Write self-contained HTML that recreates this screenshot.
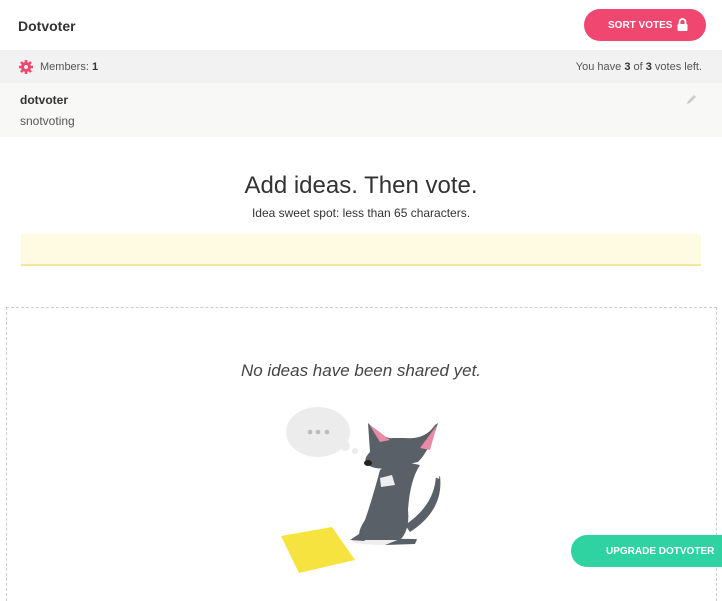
<!DOCTYPE html>
<html style="height:601px;overflow:hidden"><head><meta charset="utf-8"><style>
*{margin:0;padding:0;box-sizing:border-box}
body{width:722px;height:601px;overflow:hidden;background:#fff;font-family:"Liberation Sans",sans-serif;color:#333;position:relative}
.abs{position:absolute}
</style></head><body>
<div class="abs" style="left:18px;top:18px;font-size:14px;font-weight:bold;color:#333">Dotvoter</div>
<div class="abs" style="left:584px;top:9px;width:122px;height:32px;border-radius:16px;background:#ef476f;color:#fff;font-size:10px;font-weight:bold;padding-left:24px;padding-top:11px">SORT VOTES
<svg class="abs" style="left:93px;top:9px" width="11" height="13" viewBox="0 0 11 13"><path d="M2.5 6V4a3 3 0 0 1 6 0v2" stroke="#fff" stroke-width="1.8" fill="none"/><rect x="0.5" y="6" width="10" height="7" rx="1" fill="#fff"/></svg></div>
<div class="abs" style="left:0;top:50px;width:722px;height:33px;background:#f2f2f2"></div>
<svg class="abs" style="left:19px;top:60px" width="14" height="14" viewBox="0 0 14 14"><circle cx="7" cy="7" r="5" fill="#ef476f"/><g stroke="#ef476f" stroke-width="2.6"><line x1="7" y1="0" x2="7" y2="14"/><line x1="0" y1="7" x2="14" y2="7"/><line x1="2" y1="2" x2="12" y2="12"/><line x1="12" y1="2" x2="2" y2="12"/></g><circle cx="7" cy="7" r="2" fill="#f2f2f2"/></svg>
<div class="abs" style="left:40px;top:61px;font-size:11px;color:#555">Members: <b style="color:#333">1</b></div>
<div class="abs" style="right:20px;top:61px;font-size:11px;color:#555">You have <b style="color:#333">3</b> of <b style="color:#333">3</b> votes left.</div>
<div class="abs" style="left:0;top:83px;width:722px;height:54px;background:#f8f8f7"></div>
<div class="abs" style="left:20px;top:93px;font-size:12px;font-weight:bold;color:#333">dotvoter</div>
<div class="abs" style="left:20px;top:114px;font-size:12px;color:#555">snotvoting</div>
<svg class="abs" style="left:685px;top:94px" width="12" height="12" viewBox="0 0 12 12"><path d="M2 10l1-3 6-6 2 2-6 6z" fill="#ccc"/></svg>
<div class="abs" style="left:0;top:172px;width:722px;text-align:center;font-size:24px;color:#333">Add ideas. Then vote.</div>
<div class="abs" style="left:0;top:206px;width:722px;text-align:center;font-size:12px;color:#333">Idea sweet spot: less than 65 characters.</div>
<div class="abs" style="left:21px;top:234px;width:680px;height:32px;background:#fffbe3;border-bottom:2px solid #f1e7a0"></div>
<div class="abs" style="left:6px;top:307px;width:711px;height:294px;border:1px dashed #ccc;border-bottom:none"></div>
<div class="abs" style="left:0;top:361px;width:722px;text-align:center;font-size:17px;font-style:italic;color:#444">No ideas have been shared yet.</div>
<svg class="abs" style="left:270px;top:395px" width="200" height="185" viewBox="270 395 200 185">
<ellipse cx="318" cy="432" rx="32" ry="25" fill="#ececec"/>
<circle cx="345" cy="446" r="5" fill="#ececec"/><circle cx="355" cy="451" r="3" fill="#ececec"/>
<circle cx="310" cy="432" r="2.3" fill="#bbb"/><circle cx="318" cy="432" r="2.3" fill="#bbb"/><circle cx="327" cy="432" r="2.3" fill="#bbb"/>
<polygon points="281,536 332,527 355,560 299,573" fill="#f6e33f"/>
<ellipse cx="385" cy="541" rx="33" ry="4" fill="#eee"/>
<path d="M405 525 Q435 505 436 475 L440 476 Q444 510 410 532 Z" fill="#5a6068"/>
<path d="M436 470 l4 3 -1 6 -4 -2z" fill="#fff"/>
<path d="M380 470 Q372 500 365 520 Q355 535 362 540 L400 540 Q410 530 408 510 Q410 480 420 465 L395 460 Z" fill="#5a6068"/>
<path d="M368 423 Q385 440 393 438 L405 438 Q425 440 435 425 L438 423 Q430 450 418 462 L390 468 Q375 470 368 465 Q362 460 370 452 Z" fill="#5a6068"/>
<path d="M369 424 L390 440 L380 442 Z" fill="#e98aa5"/>
<path d="M437 425 L420 448 L430 450 Z" fill="#e98aa5"/>
<ellipse cx="368" cy="463" rx="4" ry="3" fill="#222"/>
<path d="M380 478 l12 -3 3 10 -14 2z" fill="#eee"/>
<path d="M350 540 l12 -8 10 3 -8 6z M385 545 l15 -6 17 0 -2 5z" fill="#5a6068"/>
</svg>
<div class="abs" style="left:571px;top:535px;width:151px;height:32px;border-radius:16px 0 0 16px;background:#2fd3a2;color:#fff;font-size:10px;font-weight:bold;padding-top:11px;padding-left:35px">UPGRADE DOTVOTER</div>
</body></html>
